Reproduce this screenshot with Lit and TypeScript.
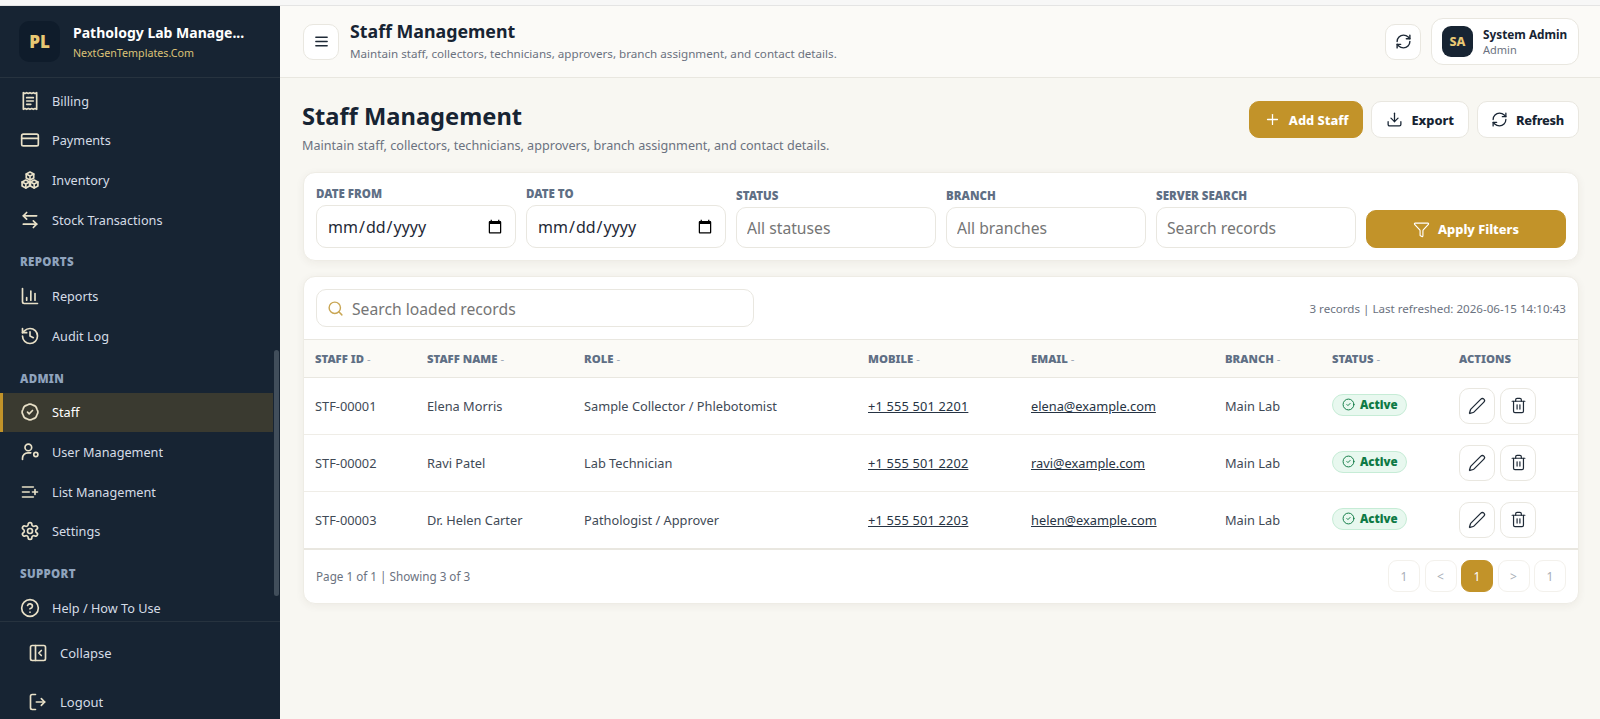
import { LitElement, html, css, svg } from 'lit';
import { customElement } from 'lit/decorators.js';

const ic = (body: unknown, size = 20, sw = 2) => html`<svg class="ic" width=${size} height=${size} viewBox="0 0 24 24" fill="none" stroke="currentColor" stroke-width=${sw} stroke-linecap="round" stroke-linejoin="round">${body}</svg>`;

const icons = {
  receipt: svg`<path d="M4 2v20l2-1 2 1 2-1 2 1 2-1 2 1 2-1 2 1V2l-2 1-2-1-2 1-2-1-2 1-2-1-2 1Z"/><path d="M8 8h8"/><path d="M8 12h8"/><path d="M8 16h5"/>`,
  card: svg`<rect x="2" y="5" width="20" height="14" rx="2"/><path d="M2 10h20"/>`,
  boxes: svg`<path d="M12 2.5l4.5 2.4v4.7L12 12 7.5 9.600V4.900Z"/><path d="M7.500 4.900 12 7.300l4.500-2.400M12 7.300V12"/><path d="M7 12l4.500 2.400v4.700L7 21.500l-4.500-2.400v-4.700Z"/><path d="M2.500 14.400 7 16.800l4.500-2.400M7 16.800v4.700"/><path d="M17 12l4.500 2.400v4.700L17 21.500l-4.500-2.400v-4.700Z"/><path d="M12.500 14.400 17 16.800l4.500-2.400M17 16.800v4.700"/>`,
  swap: svg`<path d="M8 3 4 7l4 4"/><path d="M4 7h16"/><path d="m16 13 4 4-4 4"/><path d="M20 17H4"/>`,
  chart: svg`<path d="M3 3v16a2 2 0 0 0 2 2h16"/><path d="M8 17v-3"/><path d="M13 17V6"/><path d="M18 17V9"/>`,
  history: svg`<path d="M3 12a9 9 0 1 0 9-9 9.75 9.75 0 0 0-6.740 2.740L3 8"/><path d="M3 3v5h5"/><path d="M12 7v5l4 2"/>`,
  badge: svg`<path d="M15.440 3.690A6 6 0 0 1 20.310 8.560 6 6 0 0 1 20.310 15.440 6 6 0 0 1 15.440 20.310 6 6 0 0 1 8.560 20.310 6 6 0 0 1 3.690 15.440 6 6 0 0 1 3.690 8.560 6 6 0 0 1 8.560 3.690 6 6 0 0 1 15.440 3.690Z"/><path d="m9 12.200 2 2 4-4"/>`,
  userCog: svg`<circle cx="10" cy="6.500" r="4"/><path d="M3 21v-1.500A6.500 6.500 0 0 1 9.500 13H13"/><circle cx="19" cy="15" r="2.500"/>`,
  listPlus: svg`<path d="M11 12H3"/><path d="M16 6H3"/><path d="M16 18H3"/><path d="M18 9v6"/><path d="M21 12h-6"/>`,
  gear: svg`<path d="M12.220 2h-.44a2 2 0 0 0-2 2v.18a2 2 0 0 1-1 1.730l-.43.25a2 2 0 0 1-2 0l-.15-.08a2 2 0 0 0-2.730.73l-.22.38a2 2 0 0 0 .73 2.730l.15.1a2 2 0 0 1 1 1.720v.51a2 2 0 0 1-1 1.740l-.15.09a2 2 0 0 0-.73 2.730l.22.38a2 2 0 0 0 2.730.73l.15-.08a2 2 0 0 1 2 0l.43.25a2 2 0 0 1 1 1.730V20a2 2 0 0 0 2 2h.44a2 2 0 0 0 2-2v-.18a2 2 0 0 1 1-1.730l.43-.25a2 2 0 0 1 2 0l.15.08a2 2 0 0 0 2.730-.73l.22-.39a2 2 0 0 0-.73-2.730l-.15-.08a2 2 0 0 1-1-1.740v-.5a2 2 0 0 1 1-1.740l.15-.09a2 2 0 0 0 .73-2.730l-.22-.38a2 2 0 0 0-2.730-.73l-.15.08a2 2 0 0 1-2 0l-.43-.25a2 2 0 0 1-1-1.730V4a2 2 0 0 0-2-2z"/><circle cx="12" cy="12" r="3"/>`,
  help: svg`<circle cx="12" cy="12" r="10"/><path d="M9.090 9a3 3 0 0 1 5.830 1c0 2-3 3-3 3"/><path d="M12 17h.01"/>`,
  collapse: svg`<rect x="3" y="3" width="18" height="18" rx="2"/><path d="M9 3v18"/><path d="m16 15-3-3 3-3"/>`,
  logout: svg`<path d="M9 21H5a2 2 0 0 1-2-2V5a2 2 0 0 1 2-2h4"/><path d="m16 16 4-4-4-4"/><path d="M20 12H10"/>`,
  menu: svg`<path d="M4 6h16"/><path d="M4 12h16"/><path d="M4 18h16"/>`,
  refresh: svg`<path d="M3 12a9 9 0 0 1 9-9 9.750 9.750 0 0 1 6.740 2.740L21 8"/><path d="M21 3v5h-5"/><path d="M21 12a9 9 0 0 1-9 9 9.750 9.750 0 0 1-6.740-2.740L3 16"/><path d="M8 16H3v5"/>`,
  plus: svg`<path d="M5 12h14"/><path d="M12 5v14"/>`,
  download: svg`<path d="M21 15v4a2 2 0 0 1-2 2H5a2 2 0 0 1-2-2v-4"/><path d="m7 10 5 5 5-5"/><path d="M12 15V3"/>`,
  funnel: svg`<path d="M10 20a1 1 0 0 0 .553.895l2 1A1 1 0 0 0 14 21v-7a2 2 0 0 1 .517-1.341L21.740 4.670A1 1 0 0 0 21 3H3a1 1 0 0 0-.742 1.670l7.225 7.989A2 2 0 0 1 10 14z"/>`,
  search: svg`<circle cx="11" cy="11" r="8"/><path d="m21 21-4.300-4.300"/>`,
  pencil: svg`<path d="M21.174 6.812a1 1 0 0 0-3.986-3.987L3.842 16.174a2 2 0 0 0-.5.83l-1.321 4.352a.5.5 0 0 0 .623.622l4.353-1.320a2 2 0 0 0 .83-.497z"/>`,
  trash: svg`<path d="M3 6h18"/><path d="M19 6v14c0 1-1 2-2 2H7c-1 0-2-1-2-2V6"/><path d="M8 6V4c0-1 1-2 2-2h4c1 0 2 1 2 2v2"/><path d="M10 11v6"/><path d="M14 11v6"/>`,
  check: svg`<circle cx="12" cy="12" r="10"/><path d="m9 12 2 2 4-4"/>`,
};

type NavEntry = { label: string; icon?: keyof typeof icons; active?: boolean; section?: boolean };

const nav: NavEntry[] = [
  { label: 'Billing', icon: 'receipt' },
  { label: 'Payments', icon: 'card' },
  { label: 'Inventory', icon: 'boxes' },
  { label: 'Stock Transactions', icon: 'swap' },
  { label: 'Reports', section: true },
  { label: 'Reports', icon: 'chart' },
  { label: 'Audit Log', icon: 'history' },
  { label: 'Admin', section: true },
  { label: 'Staff', icon: 'badge', active: true },
  { label: 'User Management', icon: 'userCog' },
  { label: 'List Management', icon: 'listPlus' },
  { label: 'Settings', icon: 'gear' },
  { label: 'Support', section: true },
  { label: 'Help / How To Use', icon: 'help' },
];

const staff = [
  ['STF-00001', 'Elena Morris', 'Sample Collector / Phlebotomist', '+1 555 501 2201', 'elena@example.com'],
  ['STF-00002', 'Ravi Patel', 'Lab Technician', '+1 555 501 2202', 'ravi@example.com'],
  ['STF-00003', 'Dr. Helen Carter', 'Pathologist / Approver', '+1 555 501 2203', 'helen@example.com'],
];

const columns = ['Staff ID', 'Staff Name', 'Role', 'Mobile', 'Email', 'Branch', 'Status'];

@customElement('app-root')
export class AppRoot extends LitElement {
  static styles = css`
    :host {
      display: block;
      height: 719px;
      overflow: hidden;
      font-family: 'Noto Sans', sans-serif;
      color: #172433;
      --gold: #c29329;
      --line: #e9e7e0;
    }
    * { box-sizing: border-box; }
    .ic { display: block; flex: none; }
    .strip { height: 6px; background: #f7f7f7; border-bottom: 1px solid #e4e4e4; }
    .shell { display: flex; height: 713px; }

    .side { width: 280px; flex: none; background: #172433; display: flex; flex-direction: column; position: relative; }
    .brand { height: 72px; flex: none; display: flex; align-items: center; gap: 13px; padding: 0 19px; border-bottom: 1px solid #27333f; }
    .logo { width: 41px; height: 41px; flex: none; border-radius: 10px; background: #0f1c2b; color: #e8c874; display: flex; align-items: center; justify-content: center; font-weight: 900; font-size: 17px; }
    .brand-name { font-size: 14px; font-weight: 700; color: #fff; line-height: 20px; white-space: nowrap; }
    .brand-sub { font-size: 10.700px; color: #dcc277; line-height: 16px; margin-top: 2px; }
    .nav { flex: 1; overflow: hidden; padding-top: 3px; }
    .sec { height: 26px; margin-top: 11px; padding-left: 20px; font-size: 11.500px; font-weight: 900; letter-spacing: .3px; color: #8fa3bd; text-transform: uppercase; line-height: 24px; }
    .item { height: 39.600px; display: flex; align-items: center; gap: 12px; padding-left: 20px; font-size: 12.700px; color: #d5dce6; }
    .item .ic { color: #e9e1c8; }
    .item.on { background: #3a3a30; color: #fff; border-left: 3px solid var(--gold); padding-left: 17px; margin-right: 7px; }
    .bar { position: absolute; right: 1px; top: 344px; width: 5px; height: 246px; border-radius: 3px; background: #414e5b; }
    .foot { height: 98px; flex: none; border-top: 1px solid #27333f; padding: 11px 0 0 28px; }
    .foot .row { height: 40px; display: flex; align-items: center; gap: 12px; font-size: 13px; color: #d5dce6; margin-bottom: 9px; }
    .foot .ic { color: #e9e1c8; }

    .main { flex: 1; min-width: 0; background: #f8f7f2; }
    .top { height: 72px; display: flex; align-items: center; gap: 11px; padding: 0 21px 0 23px; background: #fbfaf7; border-bottom: 1px solid var(--line); }
    .square { width: 36px; height: 36px; flex: none; border: 1px solid var(--line); border-radius: 10px; background: #fff; display: flex; align-items: center; justify-content: center; color: #1f2a37; padding: 0; }
    .top-title { font-size: 17.800px; font-weight: 700; line-height: 24px; margin-top: -2px; }
    .top-sub { font-size: 11.650px; color: #6b7280; line-height: 17px; margin-top: 2px; }
    .grow { flex: 1; min-width: 0; }
    .chip { width: 148px; height: 47px; margin-left: -1px; flex: none; display: flex; align-items: center; gap: 10px; padding-left: 10px; border: 1px solid var(--line); border-radius: 12px; background: #fff; }
    .avatar { width: 31px; height: 31px; border-radius: 9px; background: #172433; color: #e8c874; display: flex; align-items: center; justify-content: center; font-size: 12.500px; font-weight: 800; }
    .chip-name { font-size: 11.800px; font-weight: 700; line-height: 16px; }
    .chip-role { font-size: 11px; color: #6b7280; line-height: 15px; }

    .page { padding: 23px 21px 0 23px; }
    .head { display: flex; justify-content: space-between; align-items: flex-start; margin-bottom: 17px; }
    .head-text { margin-left: -1px; }
    h1 { margin: 0; font-size: 23.700px; line-height: 30px; font-weight: 700; }
    .head p { margin: 6px 0 0; font-size: 12.620px; line-height: 18px; color: #6b7280; }
    .actions { display: flex; gap: 8px; }
    .btn { height: 37px; display: flex; align-items: center; gap: 8px; padding: 0 14px; border: 1px solid var(--line); border-radius: 10px; background: #fff; font: 800 12.800px 'Noto Sans', sans-serif; color: #172433; }
    .btn.tight { letter-spacing: -.25px; padding: 0 14px 0 13px; }
    .btn.gold { background: var(--gold); border-color: var(--gold); color: #fff; }

    .card { background: #fff; border: 1px solid #eeece5; border-radius: 12px; box-shadow: 0 2px 8px rgba(60, 55, 30, .06); }
    .filters { height: 89px; padding: 0 12px 12px; display: grid; grid-template-columns: repeat(6, 1fr); gap: 10px; align-items: end; margin-bottom: 15px; }
    .field label { display: block; font-size: 11.500px; font-weight: 900; color: #5f6f85; text-transform: uppercase; line-height: 16px; margin-bottom: 3px; }
    .field input { display: block; width: 100%; height: 41px; border: 1px solid var(--line); border-radius: 10px; background: #fff; padding: 0 10px; font: 400 15.700px 'Noto Sans', sans-serif; color: #1f2a37; outline: none; }
    .field.date input { height: 43px; font-size: 16px; }
    .apply { height: 38px; justify-content: center; width: 100%; }

    .tools { height: 63px; display: flex; align-items: center; justify-content: space-between; padding: 0 12px; border-bottom: 1px solid var(--line); }
    .search { width: 438px; height: 38px; display: flex; align-items: center; gap: 8px; padding: 0 8px 0 10px; border: 1px solid var(--line); border-radius: 10px; color: #c9a654; }
    .search input { border: 0; outline: 0; flex: 1; min-width: 0; padding: 1px 0 0; background: none; font: 400 15.700px 'Noto Sans', sans-serif; }
    .meta { font-size: 11.600px; color: #6b7280; }
    table { width: 100%; border-collapse: collapse; table-layout: fixed; }
    th { height: 37px; background: #fbfaf6; text-align: left; padding: 0 0 0 11px; font-size: 11.300px; font-weight: 900; color: #5f6f85; text-transform: uppercase; border-bottom: 1px solid var(--line); white-space: nowrap; }
    th span { font-weight: 400; color: #9aa5b4; }
    td { height: 57.300px; padding: 0 0 0 11px; font-size: 12.800px; color: #3f4a56; border-bottom: 1px solid #efede7; white-space: nowrap; }
    tr:last-child td { border-bottom: 0; height: 56px; }
    .c1 { width: 112px; } .c2 { width: 157px; } .c3 { width: 284px; } .c4 { width: 163px; }
    .c5 { width: 194px; } .c6 { width: 107px; } .c7 { width: 127px; }
    a { color: #273444; text-decoration: underline; }
    a.tel { letter-spacing: .17px; }
    .pill { display: inline-flex; align-items: center; gap: 5px; height: 22px; margin-bottom: 2px; padding: 0 8px 0 9px; border-radius: 11px; background: #e8f8ef; border: 1px solid #c6ecd6; color: #0f7a45; font-size: 11.500px; font-weight: 900; vertical-align: middle; }
    .ops { display: flex; gap: 5px; }
    .pager-row { height: 55px; display: flex; align-items: center; justify-content: space-between; padding: 0 12px; font-size: 11.700px; color: #6b7280; border-top: 2px solid var(--line); }
    .pager { display: flex; gap: 4.500px; }
    .pager span { width: 32px; height: 32px; display: flex; align-items: center; justify-content: center; border: 1px solid #f3f1ec; border-radius: 9px; color: #a8aeb6; font-size: 12px; }
    .pager span.on { background: var(--gold); border-color: var(--gold); color: #fff; }
  `;

  render() {
    return html`
      <div class="strip"></div>
      <div class="shell">
        <aside class="side">
          <div class="brand">
            <div class="logo">PL</div>
            <div>
              <div class="brand-name">Pathology Lab Manage...</div>
              <div class="brand-sub">NextGenTemplates.Com</div>
            </div>
          </div>
          <div class="nav">
            ${nav.map((n) =>
              n.section
                ? html`<div class="sec">${n.label}</div>`
                : html`<div class="item ${n.active ? 'on' : ''}">${ic(icons[n.icon!])}${n.label}</div>`
            )}
          </div>
          <div class="bar"></div>
          <div class="foot">
            <div class="row">${ic(icons.collapse)}Collapse</div>
            <div class="row">${ic(icons.logout)}Logout</div>
          </div>
        </aside>
        <div class="main">
          <header class="top">
            <button class="square">${ic(icons.menu, 17)}</button>
            <div class="grow">
              <div class="top-title">Staff Management</div>
              <div class="top-sub">Maintain staff, collectors, technicians, approvers, branch assignment, and contact details.</div>
            </div>
            <button class="square">${ic(icons.refresh, 17)}</button>
            <div class="chip">
              <div class="avatar">SA</div>
              <div>
                <div class="chip-name">System Admin</div>
                <div class="chip-role">Admin</div>
              </div>
            </div>
          </header>
          <main class="page">
            <div class="head">
              <div class="head-text">
                <h1>Staff Management</h1>
                <p>Maintain staff, collectors, technicians, approvers, branch assignment, and contact details.</p>
              </div>
              <div class="actions">
                <button class="btn gold">${ic(icons.plus, 17, 1.8)}Add Staff</button>
                <button class="btn">${ic(icons.download, 17, 1.8)}Export</button>
                <button class="btn tight">${ic(icons.refresh, 17, 1.8)}Refresh</button>
              </div>
            </div>
            <section class="card filters">
              <div class="field date"><label>Date From</label><input type="date" /></div>
              <div class="field date"><label>Date To</label><input type="date" /></div>
              <div class="field"><label>Status</label><input placeholder="All statuses" /></div>
              <div class="field"><label>Branch</label><input placeholder="All branches" /></div>
              <div class="field"><label>Server Search</label><input placeholder="Search records" /></div>
              <button class="btn gold apply">${ic(icons.funnel, 17, 1.6)}Apply Filters</button>
            </section>
            <section class="card">
              <div class="tools">
                <div class="search">${ic(icons.search, 17)}<input placeholder="Search loaded records" /></div>
                <div class="meta">3 records | Last refreshed: 2026-06-15 14:10:43</div>
              </div>
              <table>
                <thead>
                  <tr>
                    ${columns.map((c, i) => html`<th class="c${i + 1}">${c} <span>-</span></th>`)}
                    <th>Actions</th>
                  </tr>
                </thead>
                <tbody>
                  ${staff.map(
                    (s) => html`<tr>
                      <td>${s[0]}</td>
                      <td>${s[1]}</td>
                      <td>${s[2]}</td>
                      <td><a class="tel">${s[3]}</a></td>
                      <td><a>${s[4]}</a></td>
                      <td>Main Lab</td>
                      <td><span class="pill">${ic(icons.check, 13, 1.8)}Active</span></td>
                      <td>
                        <div class="ops">
                          <button class="square">${ic(icons.pencil, 18, 1.7)}</button>
                          <button class="square">${ic(icons.trash, 17, 1.7)}</button>
                        </div>
                      </td>
                    </tr>`
                  )}
                </tbody>
              </table>
              <div class="pager-row">
                <div>Page 1 of 1 | Showing 3 of 3</div>
                <div class="pager">
                  <span>1</span><span>&lt;</span><span class="on">1</span><span>&gt;</span><span>1</span>
                </div>
              </div>
            </section>
          </main>
        </div>
      </div>
    `;
  }
}
